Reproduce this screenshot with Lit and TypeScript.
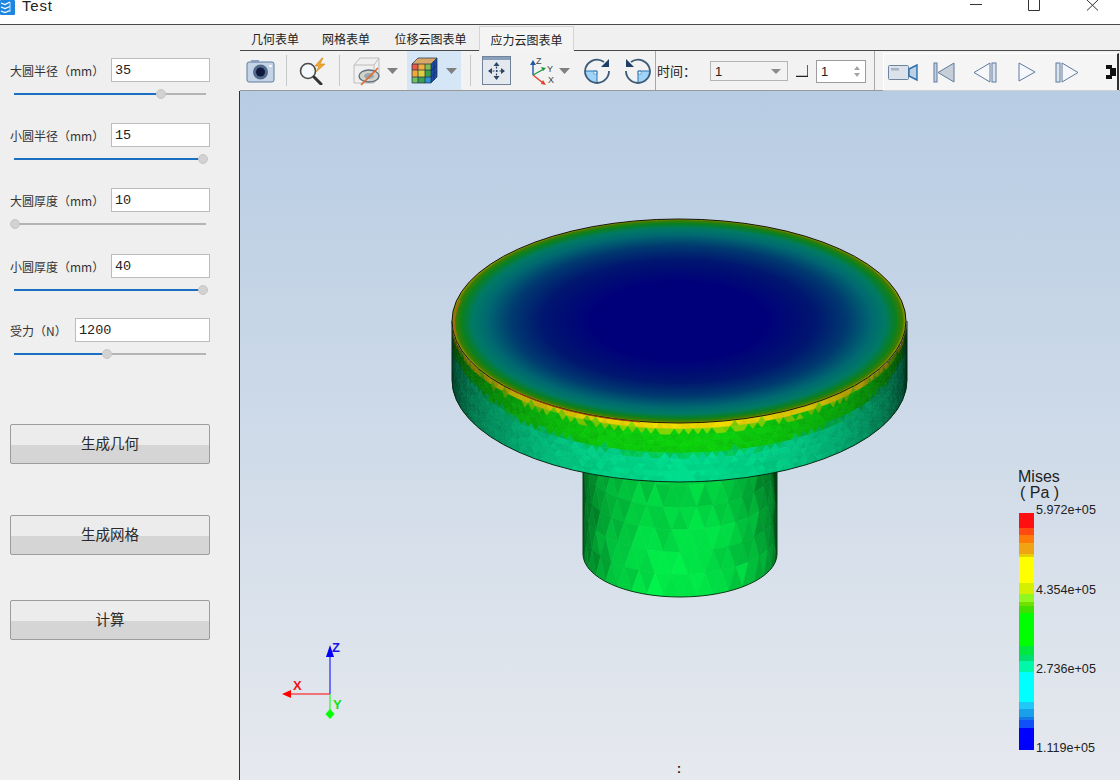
import { LitElement, html, css, svg } from "lit";
import { customElement } from "lit/decorators.js";

const params = [
  { label: "大圆半径（mm）", value: "35", pct: 77.6, cls: "gap-1" },
  { label: "小圆半径（mm）", value: "15", pct: 100, cls: "gap-2" },
  { label: "大圆厚度（mm）", value: "10", pct: 0, cls: "gap-2" },
  { label: "小圆厚度（mm）", value: "40", pct: 100, cls: "gap-3" },
  { label: "受力（N）", value: "1200", pct: 49, cls: "gap-4 short" },
];

const tabs = [
  { label: "几何表单", cls: "t1" },
  { label: "网格表单", cls: "t2" },
  { label: "位移云图表单", cls: "t3" },
  { label: "应力云图表单", cls: "t4 active" },
];

const legend: [number, number, string][] = [
  [513, 528, "#ff1010"], [528, 535, "#ff4a12"], [535, 543, "#ff7a08"], [543, 554, "#f0a414"],
  [554, 557, "#e8d000"], [557, 583, "#ffff00"], [583, 594, "#d4ef00"], [594, 602, "#90f820"],
  [602, 606, "#70e000"], [606, 613, "#40e000"], [613, 646, "#00ff00"], [646, 655, "#00e840"],
  [655, 661, "#00e070"], [661, 672, "#00f8a8"], [672, 702, "#00ffff"], [702, 709, "#20c8f8"],
  [709, 717, "#18a0e8"], [717, 720, "#1478e8"], [720, 728, "#1050f8"], [728, 750, "#0000ff"],
];

// repeatable noise so that the mesh is the same on each load
const noise = (a: number, b: number) => {
  const n = Math.sin(a * 127.1 + b * 311.7) * 43758.5453;
  return n - Math.floor(n);
};

const rgb = (c: number[], k: number) =>
  `rgb(${c.map((v) => Math.round(Math.min(255, v * k))).join(",")})`;

// triangle strip mesh wrapped round the visible half of a cylinder
function cylinder(
  cx: number, rx: number, ry: number, yTop: number, h: number,
  cols: number, rows: number, colour: (v: number, th: number, i: number, j: number) => string
) {
  const pt = (i: number, j: number): [number, number] => {
    const th = -Math.PI / 2 + (Math.PI * (i + (j % 2) * 0.5)) / cols;
    return [cx + rx * Math.sin(th), yTop + ry * Math.cos(th) + (h * j) / rows];
  };
  const out = [];
  for (let j = 0; j < rows; j++) {
    for (let i = -1; i <= cols; i++) {
      const a = pt(i, j), b = pt(i + 1, j), c = pt(i, j + 1), d = pt(i + 1, j + 1);
      const tris = j % 2 ? [[a, b, d], [a, d, c]] : [[a, b, c], [b, d, c]];
      tris.forEach((t, k) => {
        const th = (-Math.PI / 2) + (Math.PI * (i + 0.5 + k * 0.3)) / cols;
        const fill = colour((j + 0.33 + k * 0.33) / rows, th, i * 2 + k, j);
        const pts = t.map((p) => `${p[0].toFixed(1)},${p[1].toFixed(1)}`).join(" ");
        out.push(svg`<polygon points=${pts} fill=${fill} stroke=${fill} stroke-width="0.6"></polygon>`);
      });
    }
  }
  return out;
}

const stemColour = (v: number, th: number, i: number, j: number) => {
  const c = Math.max(0, Math.cos(th));
  const k = 0.22 + 0.58 * c + 0.14 * v + (noise(i, j) - 0.5) * 0.1;
  return rgb([0, 255, 78], k);
};

const flangeColour = (v: number, th: number, i: number, j: number) => {
  const c = Math.max(0, Math.cos(th));
  const spread = 0.3 + 0.7 * c;
  const t = v + (noise(i, j) - 0.5) * 0.06;
  const pal =
    t < 0.09 * spread ? [236, 214, 0]
    : t < 0.16 * spread ? [130, 214, 0]
    : t < 0.45 * spread + 0.05 ? [10, 206, 10]
    : t < 0.52 * spread + 0.05 ? [0, 204, 90]
    : [0, 216, 140];
  const k = 0.2 + 0.8 * c + (noise(j, i) - 0.5) * 0.08;
  return rgb(pal, k);
};

@customElement("app-root")
export class AppRoot extends LitElement {
  static styles = css`
    :host {
      display: block;
      width: 1120px;
      height: 780px;
      overflow: hidden;
      background: #fff;
      color: #222;
      font-family: "Noto Sans CJK SC", "Liberation Sans", sans-serif;
    }
    .titlebar {
      height: 24px;
      display: flex;
      align-items: flex-start;
      background: #fff;
      border-bottom: 1px solid #4a4a4a;
    }
    .app-icon { width: 16px; height: 15px; }
    .title {
      margin-left: 6px;
      font: 15px/12px "Liberation Sans", sans-serif;
      letter-spacing: 0.8px;
      color: #222;
    }
    .win { display: flex; margin-left: auto; }
    .win svg { width: 12px; height: 12px; display: block; }
    .win .b1 { margin-right: 46px; }
    .win .b2 { margin-right: 47px; }
    .win .b3 { margin-right: 21px; }

    .body { display: flex; height: 755px; }
    .side {
      width: 240px;
      flex: none;
      box-sizing: border-box;
      background: #efefef;
      padding: 33px 0 0 10px;
    }
    .row { display: flex; align-items: center; height: 24px; }
    .gap-2 { margin-top: 28px; }
    .gap-3 { margin-top: 29px; }
    .gap-4 { margin-top: 27px; }
    .row label { font-size: 12px; width: 101px; flex: none; color: #333; }
    .short .row label { width: 65px; }
    .row input {
      box-sizing: border-box;
      flex: none;
      width: 99px;
      height: 24px;
      margin: 0;
      padding: 0 3px;
      border: 1.5px solid #bcbcbc;
      border-radius: 0;
      outline: none;
      background: #fff;
      color: #222;
      font: 13.5px "Liberation Mono", monospace;
    }
    .short .row input { width: 135px; }
    .slider {
      position: relative;
      width: 192px;
      height: 2px;
      margin: 11px 0 0 4px;
      background: #b4b4b4;
    }
    .fill { height: 100%; background: #1a6fc0; }
    .thumb {
      position: absolute;
      top: -4px;
      width: 10px;
      height: 10px;
      margin-left: -5px;
      border-radius: 50%;
      background: #d2d2d2;
      border: 0.5px solid #c6c6c6;
      box-sizing: border-box;
    }
    .actions { margin-top: 69px; width: 200px; }
    .actions button {
      display: block;
      box-sizing: border-box;
      width: 200px;
      height: 40px;
      padding: 0 0 3px;
      border: 1px solid #9c9c9c;
      border-radius: 2px;
      background: linear-gradient(#ececec 0 52%, #d5d5d5 52% 100%);
      color: #2a2a2a;
      font: 14.5px "Noto Sans CJK SC", sans-serif;
    }
    .actions .b2 { margin-top: 51px; }
    .actions .b3 { margin-top: 45px; }

    .main { flex: 1; min-width: 0; display: flex; flex-direction: column; }
    .tabs {
      height: 26px;
      flex: none;
      box-sizing: border-box;
      display: flex;
      align-items: flex-end;
      background: #f0f0f0;
      border-bottom: 1px solid #4a4a4a;
      font-size: 12px;
    }
    .tab { height: 25px; line-height: 27px; text-align: center; color: #222; }
    .t1 { width: 70px; }
    .t2 { width: 72px; }
    .t3 { width: 97px; }
    .t4 { width: 95px; }
    .tab.active {
      height: 25px;
      margin-bottom: -1px;
      background: #f4f4f4;
      border: 1px solid #d4d4d4;
      border-bottom: 1px solid #f4f4f4;
      box-sizing: border-box;
      line-height: 25px;
    }
    .toolbar {
      height: 40px;
      flex: none;
      box-sizing: border-box;
      display: flex;
      align-items: stretch;
      background: #f2f2f2;
      border-bottom: 1px solid #9a9a9a;
      padding-left: 6px;
    }
    .tool { display: flex; align-items: center; flex: none; }
    .tool svg { display: block; flex: none; }
    .sep { width: 1px; flex: none; margin-top: 4px; margin-bottom: 4px; background: #c8c8c8; }
    .sep.full { margin-top: 0; margin-bottom: 0; background: #a8a8a8; }
    .ml1 { margin-left: 1px; }
    .ml4 { margin-left: 4px; }
    .ml8 { margin-left: 8px; }
    .ml9 { margin-left: 9px; }
    .ml11 { margin-left: 11px; }
    .ml12 { margin-left: 12px; }
    .ml14 { margin-left: 14px; }
    .ml15 { margin-left: 15px; }
    .ml17 { margin-left: 17px; }
    .drop { gap: 7px; }
    .hot { background: #d5e6f7; width: 54px; padding-left: 4px; gap: 8px; box-sizing: border-box; }
    .time { width: 36px; font-size: 13px; white-space: nowrap; }
    .combo {
      box-sizing: border-box;
      width: 78px;
      height: 20px;
      margin-top: 10px;
      display: flex;
      align-items: center;
      justify-content: space-between;
      padding: 0 6px 0 4px;
      border: 1px solid #b4b4b4;
      font: 13px "Liberation Sans", sans-serif;
    }
    .spin {
      box-sizing: border-box;
      width: 50px;
      height: 23px;
      margin-top: 9px;
      display: flex;
      align-items: center;
      justify-content: space-between;
      padding: 0 4px 0 4px;
      border: 1px solid #9c9c9c;
      background: #fff;
      font: 13px "Liberation Sans", sans-serif;
    }
    .media {
      box-sizing: border-box;
      width: 236px;
      margin-top: 2px;
      display: flex;
      align-items: center;
      background: #f5f5f5;
      border-top: 1px solid #fff;
      border-left: 1px solid #fff;
      border-right: 2px solid #303030;
      box-shadow: 0 1px 0 #d0d0d0;
      padding-left: 4px;
    }
    .m1 { margin-left: 15px; }
    .m2 { margin-left: 18px; }
    .m3 { margin-left: 21px; }
    .m4 { margin-left: 19px; }
    .m5 { margin-left: 26px; }
    .pull { margin-left: -6px; }
    .view { flex: 1; min-height: 0; border-left: 1px solid #333; margin-left: -1px; }
    .view svg { display: block; width: 880px; height: 689px; }
    .legend-text { font: 12.6px "Liberation Sans", sans-serif; fill: #222; }
    .legend-title { font: 16px "Liberation Sans", sans-serif; fill: #222; }
    .axis-text { font: bold 13px "Liberation Sans", sans-serif; }
  `;

  private viewport() {
    return svg`
      <defs>
        <linearGradient id="bg" x1="0" y1="0" x2="0" y2="1">
          <stop offset="0" stop-color="#b7cce3"></stop>
          <stop offset="1" stop-color="#e6e9ee"></stop>
        </linearGradient>
        <radialGradient id="face" cx="0.5" cy="0.5" r="0.5">
          <stop offset="0" stop-color="#00007a"></stop>
          <stop offset="0.38" stop-color="#00007a"></stop>
          <stop offset="0.6" stop-color="#00166f"></stop>
          <stop offset="0.74" stop-color="#003a70"></stop>
          <stop offset="0.85" stop-color="#006a70"></stop>
          <stop offset="0.91" stop-color="#007a64"></stop>
          <stop offset="0.955" stop-color="#0a8020"></stop>
          <stop offset="0.985" stop-color="#3e7c00"></stop>
          <stop offset="1" stop-color="#a89e00"></stop>
        </radialGradient>
        <clipPath id="flange-clip">
          <path d="M452 321 A227 102 0 0 1 906 321 L907 380 A227.5 102 0 0 1 452 380 Z"></path>
        </clipPath>
        <clipPath id="stem-clip">
          <path d="M583 460 H777 V554 A97 43 0 0 1 583 554 Z"></path>
        </clipPath>
      </defs>
      <rect x="240" y="91" width="880" height="689" fill="url(#bg)"></rect>

      <g clip-path="url(#stem-clip)">
        ${cylinder(680, 97, 43, 420, 134, 18, 6, stemColour)}
      </g>
      <path d="M583 472 V554 A97 43 0 0 0 777 554 V472" fill="none" stroke="#0a3a14" stroke-width="1"></path>

      <g clip-path="url(#flange-clip)">
        ${cylinder(679, 228, 102, 321, 60, 76, 10, flangeColour)}
      </g>
      <path d="M452 321 V380 A227.5 102 0 0 0 907 380 V321" fill="none" stroke="#0b2a14" stroke-width="1"></path>

      <ellipse cx="679" cy="321" rx="227" ry="102" fill="url(#face)" stroke="#14140a" stroke-width="1"></ellipse>
      <path d="M510 389 A227 102 0 0 0 640 422" fill="none" stroke="#a03a10" stroke-width="1"></path>
      <path d="M460 300 A227 102 0 0 0 456 336" fill="none" stroke="#a06a10" stroke-width="2"></path>

      ${legend.map(
        ([a, b, c]) => svg`<rect x="1019" y=${a} width="15" height=${b - a} fill=${c}></rect>`
      )}
      <text class="legend-title" x="1018" y="482">Mises</text>
      <text class="legend-title" x="1020" y="498">( Pa )</text>
      <text class="legend-text" x="1036" y="514">5.972e+05</text>
      <text class="legend-text" x="1036" y="594">4.354e+05</text>
      <text class="legend-text" x="1036" y="673">2.736e+05</text>
      <text class="legend-text" x="1036" y="752">1.119e+05</text>

      <line x1="330" y1="694" x2="330" y2="652" stroke="#0000ff"></line>
      <path d="M330 645 L334 657 H326 Z" fill="#0000ff"></path>
      <line x1="330" y1="694" x2="290" y2="694" stroke="#ff0000"></line>
      <path d="M282 694 L291 690 V698 Z" fill="#ff0000"></path>
      <line x1="330" y1="694" x2="330" y2="712" stroke="#00ff00"></line>
      <path d="M330 709 L334.5 714 L330 719 L325.5 714 Z" fill="#00ff00"></path>
      <text class="axis-text" x="332" y="652" fill="#1414f0">Z</text>
      <text class="axis-text" x="293" y="690" fill="#f01414">X</text>
      <text class="axis-text" x="333" y="709" fill="#14e014">Y</text>
      <text x="677" y="773" font-family="Liberation Sans" font-weight="bold" font-size="12" fill="#111">:</text>
    `;
  }

  render() {
    return html`
      <div class="titlebar">
        <svg class="app-icon" viewBox="0 0 16 15">
          <rect width="15" height="15" rx="1" fill="#1f86e0"></rect>
          <path d="M1 3l4 1.5L10 2M1 7l4 1.5 5-2M1 11l4 1.5 5-2" stroke="#fff" stroke-width="1.2" fill="none"></path>
          <path d="M10 2v10" stroke="#bfe0fa" stroke-width="1"></path>
        </svg>
        <span class="title">Test</span>
        <div class="win">
          <svg class="b1" viewBox="0 0 12 12"><path d="M0 4.5H12" stroke="#333"></path></svg>
          <svg class="b2" viewBox="0 0 12 12"><path d="M.5 0V10.5H11.5V0" stroke="#333" fill="none"></path></svg>
          <svg class="b3" viewBox="0 0 12 12"><path d="M0 0L11 10.5M11 0L0 10.5" stroke="#333" fill="none"></path></svg>
        </div>
      </div>
      <div class="body">
        <aside class="side">
          ${params.map(
            (p) => html`
              <div class=${p.cls}>
                <div class="row">
                  <label>${p.label}</label>
                  <input .value=${p.value} />
                </div>
                <div class="slider">
                  <div class="fill" style="width:${1 + p.pct * 1.88}px"></div>
                  <div class="thumb" style="left:${1 + p.pct * 1.88}px"></div>
                </div>
              </div>
            `
          )}
          <div class="actions">
            <button>生成几何</button>
            <button class="b2">生成网格</button>
            <button class="b3">计算</button>
          </div>
        </aside>
        <section class="main">
          <div class="tabs">
            ${tabs.map((t) => html`<div class="tab ${t.cls}">${t.label}</div>`)}
          </div>
          <div class="toolbar">
            <div class="tool">
              <svg width="29" height="26" viewBox="0 0 29 26">
                <rect x="1" y="4" width="27" height="20" rx="2" fill="#c5d3e6" stroke="#5f7d9e"></rect>
                <rect x="5" y="2" width="8" height="3" fill="#8aa2bf"></rect>
                <circle cx="14.5" cy="14" r="7.5" fill="#506a8c"></circle>
                <circle cx="14.5" cy="14" r="4.5" fill="#10183c"></circle>
                <rect x="23" y="7" width="3" height="2" fill="#f4f7fb"></rect>
              </svg>
            </div>
            <div class="sep ml11"></div>
            <div class="tool ml11">
              <svg width="29" height="28" viewBox="0 0 29 28">
                <circle cx="10" cy="14" r="7.5" fill="#f4f7fb" stroke="#4a4a4a" stroke-width="1.6"></circle>
                <path d="M16 20L23 27" stroke="#333" stroke-width="3" stroke-linecap="round"></path>
                <path d="M24 1L17 9h4l-3 6 9-8h-5l3-6z" fill="#f0a830" stroke="#c98418" stroke-width="0.6"></path>
              </svg>
            </div>
            <div class="sep ml12"></div>
            <div class="tool drop ml12">
              <svg width="28" height="30" viewBox="0 0 28 30">
                <path d="M2 9L8 2H27V20L22 27H2Z" fill="#f0f0f0" stroke="#bcbcbc"></path>
                <path d="M2 9H22V27M22 9L27 2" fill="none" stroke="#bcbcbc"></path>
                <ellipse cx="17" cy="20" rx="10" ry="6" fill="#cfd3c9" stroke="#5e6e80" stroke-width="1.4"></ellipse>
                <ellipse cx="17" cy="20" rx="5" ry="3" fill="#9aa8b4"></ellipse>
                <path d="M9 29L26 12" stroke="#e0662a" stroke-width="1.6"></path>
              </svg>
              <svg width="11" height="6" viewBox="0 0 11 6"><path d="M0 0H11L5.5 6Z" fill="#808080"></path></svg>
            </div>
            <div class="tool hot ml9">
              <svg width="27" height="27" viewBox="0 0 27 27">
                <path d="M7 1H26L20 7H1Z" fill="#d8a868"></path>
                <path d="M20 7L26 1V20L20 26Z" fill="#1a4cb0"></path>
                <rect x="1" y="7" width="19" height="19" fill="#3aa050"></rect>
                <rect x="1" y="7" width="6" height="6" fill="#e85a48"></rect>
                <rect x="7" y="7" width="7" height="6" fill="#f0b038"></rect>
                <rect x="14" y="7" width="6" height="6" fill="#80c050"></rect>
                <rect x="1" y="13" width="6" height="7" fill="#f0a838"></rect>
                <rect x="7" y="13" width="7" height="7" fill="#dcd040"></rect>
                <rect x="1" y="20" width="6" height="6" fill="#70c060"></rect>
                <rect x="14" y="20" width="6" height="6" fill="#3090d8"></rect>
                <path d="M7 7V26M14 7V26M1 13H20M1 20H20M23 4V23M20 14L26 8M20 20L26 14" stroke="#1c2a4a" stroke-width="0.7"></path>
                <path d="M1 7H20V26H1ZM1 7L7 1H26V20L20 26M20 7L26 1" fill="none" stroke="#1c2a4a" stroke-width="0.7"></path>
              </svg>
              <svg width="11" height="6" viewBox="0 0 11 6"><path d="M0 0H11L5.5 6Z" fill="#808080"></path></svg>
            </div>
            <div class="sep ml9"></div>
            <div class="tool ml11">
              <svg width="29" height="29" viewBox="0 0 29 29">
                <rect x="0.5" y="0.5" width="28" height="28" fill="#e4e9f0" stroke="#6f8299"></rect>
                <rect x="1" y="1" width="27" height="3" fill="#8aa0ba"></rect>
                <path d="M14.5 7V23M7 15H22" stroke="#2c4660" stroke-width="1.2" stroke-dasharray="2 1.5"></path>
                <path d="M14.5 6l3 4h-6zM14.5 24l3-4h-6zM6 15l4-3v6zM23 15l-4-3v6z" fill="#2c4660"></path>
              </svg>
            </div>
            <div class="tool drop ml17">
              <svg width="30" height="30" viewBox="0 0 30 30">
                <path d="M5 19L5 7" stroke="#1d5aa8" stroke-width="1.4"></path>
                <path d="M5 4l3 5H2z" fill="#1d5aa8"></path>
                <path d="M5 19L16 13" stroke="#1e9a3c" stroke-width="1.4"></path>
                <path d="M18 12l-5-1 2 4z" fill="#1e9a3c"></path>
                <path d="M5 19L15 27" stroke="#e0402c" stroke-width="1.4"></path>
                <path d="M18 29l-5-1 2-4z" fill="#e0402c"></path>
                <text x="8" y="8" font-family="Liberation Sans" font-size="9" fill="#444">Z</text>
                <text x="19" y="16" font-family="Liberation Sans" font-size="9" fill="#444">Y</text>
                <text x="20" y="27" font-family="Liberation Sans" font-size="9" fill="#444">X</text>
              </svg>
              <svg class="pull" width="11" height="6" viewBox="0 0 11 6"><path d="M0 0H11L5.5 6Z" fill="#808080"></path></svg>
            </div>
            <div class="tool ml14">
              <svg width="26" height="26" viewBox="0 0 26 26">
                <path d="M1 13H13V25A12 12 0 0 1 1 13Z" fill="#9fd4f8"></path>
                <rect x="10" y="13" width="3" height="3" fill="#fff" stroke="#2a74b0" stroke-width="0.5"></rect>
                <path d="M1 13H13V25" fill="none" stroke="#2a74b0"></path>
                <path d="M20 4A12 12 0 0 0 1 13A12 12 0 1 0 25 13" fill="none" stroke="#3c5a78" stroke-width="1.8"></path>
                <path d="M25 1V9H17Z" fill="#1f3e66"></path>
              </svg>
            </div>
            <div class="tool ml15">
              <svg width="26" height="26" viewBox="0 0 26 26">
                <path d="M25 13H13V25A12 12 0 0 0 25 13Z" fill="#9fd4f8"></path>
                <rect x="13" y="13" width="3" height="3" fill="#fff" stroke="#2a74b0" stroke-width="0.5"></rect>
                <path d="M25 13H13V25" fill="none" stroke="#2a74b0"></path>
                <path d="M6 4A12 12 0 0 1 25 13A12 12 0 1 1 1 13" fill="none" stroke="#3c5a78" stroke-width="1.8"></path>
                <path d="M1 1V9H9Z" fill="#1f3e66"></path>
              </svg>
            </div>
            <div class="sep full ml4"></div>
            <div class="tool time ml1">时间：</div>
            <div class="combo ml17">
              <span>1</span>
              <svg width="10" height="5" viewBox="0 0 10 5"><path d="M0 0H10L5 5Z" fill="#8a8a8a"></path></svg>
            </div>
            <div class="tool ml8">
              <svg width="12" height="12" viewBox="0 0 12 12">
                <path d="M0 11.5H12V0" fill="none" stroke="#222" stroke-width="1.4"></path>
              </svg>
            </div>
            <div class="spin ml8">
              <span>1</span>
              <svg width="8" height="13" viewBox="0 0 8 13"><path d="M4 1L7 5H1ZM4 12L7 8H1Z" fill="#a4a4a4"></path></svg>
            </div>
            <div class="sep full ml8"></div>
            <div class="media ml8">
              <svg width="30" height="20" viewBox="0 0 30 20">
                <rect x="0.5" y="3.5" width="20" height="14" rx="1" fill="#dbe2ec" stroke="#6f859e"></rect>
                <rect x="3" y="6" width="8" height="2.5" fill="#a8b4c4"></rect>
                <path d="M21 7L29 3V18L21 14Z" fill="#bcd0e6" stroke="#2f70ae" stroke-width="1.4"></path>
              </svg>
              <svg class="m1" width="22" height="21" viewBox="0 0 22 21">
                <rect x="1" y="1" width="3" height="19" fill="#c5d0de" stroke="#5f7b9e"></rect>
                <path d="M21 1V20L5 10.5Z" fill="#c6ced8" stroke="#5f7b9e"></path>
              </svg>
              <svg class="m2" width="24" height="21" viewBox="0 0 24 21">
                <path d="M17 1V20L1 10.5Z" fill="#f5f7fa" stroke="#5f7b9e"></path>
                <rect x="19" y="1" width="4" height="19" fill="#dde4ec" stroke="#5f7b9e"></rect>
              </svg>
              <svg class="m3" width="18" height="20" viewBox="0 0 18 20">
                <path d="M1 1V19L17 10Z" fill="#f5f7fa" stroke="#5f7b9e"></path>
              </svg>
              <svg class="m4" width="24" height="21" viewBox="0 0 24 21">
                <rect x="1" y="1" width="4" height="19" fill="#dde4ec" stroke="#5f7b9e"></rect>
                <path d="M7 1V20L23 10.5Z" fill="#f5f7fa" stroke="#5f7b9e"></path>
              </svg>
              <svg class="m5" width="11" height="18" viewBox="0 0 11 18">
                <path d="M1 2H7V5H11V13H7V16H1V12H5V6H1Z" fill="#111"></path>
              </svg>
            </div>
          </div>
          <div class="view">
            <svg viewBox="240 91 880 689">${this.viewport()}</svg>
          </div>
        </section>
      </div>
    `;
  }
}
